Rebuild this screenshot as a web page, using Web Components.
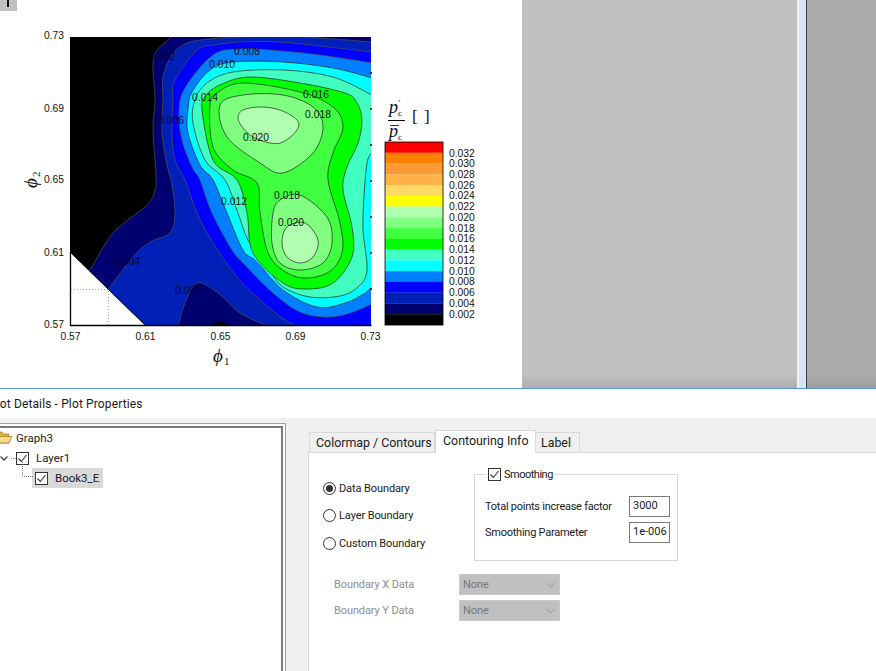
<!DOCTYPE html>
<html>
<head>
<meta charset="utf-8">
<title>Plot Details</title>
<style>
  html, body { margin: 0; padding: 0; height: 100%; overflow: hidden; background: #f0f0f0; }
  body { display: flex; flex-direction: column; width: 876px; height: 671px; font-family: Roboto, "Noto Sans", sans-serif; }
</style>
</head>
<body>
<work-area>
  <contour-plot></contour-plot>
</work-area>
<plot-dialog heading="Plot Details - Plot Properties">
  <tree-view slot="tree">
    <tree-row level="0" kind="folder">Graph3</tree-row>
    <tree-row level="1" kind="check" expander>Layer1</tree-row>
    <tree-row level="2" kind="check" selected>Book3_E</tree-row>
  </tree-view>
  <tab-panel slot="panel">
    <contour-form></contour-form>
  </tab-panel>
</plot-dialog>

<script>
class Component extends HTMLElement {
  constructor(template) {
    super()
    const _template = document.createElement('template')
    _template.innerHTML = template
    this.attachShadow({ mode: 'open' })
    this.shadowRoot.appendChild(_template.content.cloneNode(true))
  }
}

class WorkArea extends Component {
  constructor() {
    super(`
      <style>
      :host { display: flex; height: 388px; flex: none; }
      .sheet { width: 522px; background: #fff; position: relative; overflow: hidden; }
      .gap { width: 275px; background: linear-gradient(#c0c0c0 0, #c0c0c0 375px, #adadad 388px); }
      .edge { width: 9px; background: linear-gradient(90deg, #eef3fa 0 2px, #d6e3f3 2px); }
      .line { width: 1px; background: #3c3c3c; }
      .rest { flex: 1; background: linear-gradient(#ababab 0, #ababab 375px, #9c9c9c 388px); }
      .mark { position: absolute; left: 0; top: 0; width: 17px; height: 11px; background: #c0c0c0; }
      .mark i { position: absolute; left: 7px; top: 0; width: 2px; height: 7px; background: #111; }
      </style>
      <div class="sheet"><slot></slot><div class="mark"><i></i></div></div>
      <div class="gap"></div><div class="edge"></div><div class="line"></div><div class="rest"></div>
    `)
  }
}

// catmull-rom through the traced points, returned as bezier segments
function smooth(pts) {
  let d = `M${pts[0][0]} ${pts[0][1]}`
  for (let i = 0; i < pts.length - 1; i++) {
    const p0 = pts[i - 1] || pts[i], p1 = pts[i], p2 = pts[i + 1], p3 = pts[i + 2] || p2
    d += `C${(p1[0] + (p2[0] - p0[0]) / 6).toFixed(1)} ${(p1[1] + (p2[1] - p0[1]) / 6).toFixed(1)} `
      + `${(p2[0] - (p3[0] - p1[0]) / 6).toFixed(1)} ${(p2[1] - (p3[1] - p1[1]) / 6).toFixed(1)} ${p2[0]} ${p2[1]}`
  }
  return d
}
function closedLoop(pts) {
  const n = pts.length
  let d = `M${pts[0][0]} ${pts[0][1]}`
  for (let i = 0; i < n; i++) {
    const p0 = pts[(i - 1 + n) % n], p1 = pts[i], p2 = pts[(i + 1) % n], p3 = pts[(i + 2) % n]
    d += `C${(p1[0] + (p2[0] - p0[0]) / 6).toFixed(1)} ${(p1[1] + (p2[1] - p0[1]) / 6).toFixed(1)} `
      + `${(p2[0] - (p3[0] - p1[0]) / 6).toFixed(1)} ${(p2[1] - (p3[1] - p1[1]) / 6).toFixed(1)} ${p2[0]} ${p2[1]}`
  }
  return d + 'Z'
}

const BANDS = [
  ['#000070', '#555', [[180, 30], [170, 38], [156, 52], [153, 67], [155, 100], [153, 130], [156, 175], [155, 190], [147, 205], [113, 233], [90, 270], [70, 296]], [[60, 340], [385, 340], [385, 30]]],
  ['#0020b8', '#555', [[372, 42], [320, 38], [280, 36], [240, 37], [210, 39], [187, 43], [172, 55], [163, 77], [163, 100], [162, 133], [167, 165], [172, 185], [175, 213], [170, 233], [150, 242], [133, 257], [109, 288], [75, 330]], [[385, 340], [385, 42]]],
  ['#000070', '#555', [[177, 330], [185, 303], [197, 283], [217, 292], [240, 313], [268, 326], [275, 330]], []],
  ['#0000ff', '#555', [[372, 52], [320, 46], [280, 42], [240, 42], [215, 45], [197, 50], [175, 80], [173, 100], [172, 133], [175, 160], [185, 180], [197, 213], [213, 243], [237, 277], [257, 297], [285, 320], [310, 332]], [[385, 340], [385, 52]]],
  ['#0080ff', '#555', [[372, 63], [320, 55], [270, 50], [240, 49], [213, 55], [185, 88], [179, 113], [182, 140], [192, 167], [200, 180], [212, 213], [232, 250], [243, 263], [273, 293], [300, 312], [327, 317], [350, 313], [372, 304]], [[385, 304], [385, 63]]],
  ['#00ffff', '#222', [[372, 78], [333, 68], [283, 62], [233, 62], [210, 70], [192, 92], [188, 110], [188, 133], [200, 165], [213, 180], [227, 213], [243, 250], [257, 262], [283, 290], [317, 307], [345, 303], [365, 293], [375, 283]], [[385, 283], [385, 78]]],
  ['#40ffc0', '#222', [[372, 95], [333, 77], [283, 70], [233, 72], [207, 83], [195, 100], [193, 123], [205, 160], [225, 180], [238, 213], [248, 240], [267, 267], [283, 287], [310, 297], [340, 296], [358, 287], [367, 270], [363, 230], [364, 197], [367, 163], [372, 152]], [[385, 152], [385, 95]]],
]
const CORES = [
  ['#00ff00', [[202, 110], [206, 95], [222, 84], [250, 77], [300, 83], [345, 93], [357, 103], [362, 120], [358, 143], [347, 167], [343, 190], [352, 227], [352, 257], [333, 283], [307, 289], [283, 283], [253, 253], [247, 213], [237, 180], [213, 160]]],
  ['#40ff40', [[210, 105], [217, 93], [243, 83], [300, 92], [333, 107], [343, 127], [333, 153], [328, 180], [340, 223], [342, 253], [327, 273], [297, 277], [270, 257], [260, 213], [257, 183], [233, 170], [213, 147]]],
  ['#80ff80', [[220, 105], [243, 95], [283, 95], [313, 107], [323, 127], [313, 153], [283, 173], [260, 163], [227, 137]]],
  ['#80ff80', [[300, 195], [327, 217], [332, 243], [323, 263], [300, 270], [280, 263], [272, 243], [273, 213], [280, 200]]],
  ['#b0ffb0', [[238, 118], [243, 110], [260, 107], [280, 110], [297, 120], [297, 130], [283, 142], [270, 143], [253, 137], [243, 128]]],
  ['#b0ffb0', [[305, 223], [318, 240], [313, 257], [300, 263], [287, 257], [282, 243], [287, 227]]],
]
const LABELS = [
  ['0.002', 162, 60, '#000030'], ['0.008', 247, 55], ['0.010', 222, 68], ['0.014', 205, 101], ['0.006', 171, 124, '#000030'],
  ['0.016', 316, 98], ['0.018', 318, 118], ['0.020', 256, 141], ['0.018', 287, 199], ['0.020', 291, 226],
  ['0.012', 234, 205], ['0.004', 127, 265, '#000030'], ['0.006', 188, 294, '#000030'],
]
const SCALE = ['#ff0000', '#ff8000', '#ff9933', '#ffb347', '#ffd966', '#ffff00', '#b0ffb0', '#80ff80', '#40ff40', '#00ff00', '#40ffc0', '#00ffff', '#0080ff', '#0000ff', '#0020b8', '#000070', '#000000']

class ContourPlot extends Component {
  constructor() {
    const bands = BANDS.map(([fill, line, curve, tail]) => {
      const d = smooth(curve) + tail.map(p => `L${p[0]} ${p[1]}`).join('') + 'Z'
      return `<path d="${d}" fill="${fill}" stroke="${line}" stroke-width=".7"/>`
    }).join('')
    const cores = CORES.map(([fill, pts]) =>
      `<path d="${closedLoop(pts)}" fill="${fill}" stroke="#222" stroke-width=".7"/>`).join('')
    const labels = LABELS.map(([t, x, y, c]) => `<text x="${x}" y="${y}" text-anchor="middle" style="fill:${c || '#111'}">${t}</text>`).join('')
    const scale = SCALE.map((c, i) => `<rect x="385" y="${(142 + i * 10.76).toFixed(2)}" width="58" height="10.9" fill="${c}"/>`).join('')
    const scaleText = SCALE.slice(0, 16).map((c, i) =>
      `<text x="449" y="${(156.5 + i * 10.73).toFixed(1)}">${(0.032 - i * 0.002).toFixed(3)}</text>`).join('')
    let ticks = ''
    for (let y = 73; y <= 289; y += 36) ticks += `M370 ${y}h2`
    const ax = v => v.map(([t, x]) => `<text x="${x}" y="340" text-anchor="middle">${t}</text>`).join('')
    const ay = v => v.map(([t, y]) => `<text x="64" y="${y}" text-anchor="end">${t}</text>`).join('')
    super(`
      <style>
      :host { display: block; width: 522px; height: 388px; }
      svg { display: block; }
      text { font-family: "Liberation Sans", Arial, sans-serif; font-size: 10.3px; fill: #111; }
      .math, .math text { font-family: "Liberation Serif", "DejaVu Serif", serif; }
      .math text { font-size: 19px; font-style: italic; }
      .math .sub { font-size: 11px; font-style: normal; }
      </style>
      <svg width="522" height="388" viewBox="0 0 522 388">
        <defs><clipPath id="frame"><path d="M70 37H371V325H145L70 252Z"/></clipPath></defs>
        <g clip-path="url(#frame)">
          <rect x="70" y="37" width="301" height="288" fill="#000"/>
          ${bands}
          <ellipse cx="220" cy="326" rx="8" ry="4" fill="#000"/>
          ${cores}
        </g>
        <g>${labels}</g>
        <path d="M70.5 252.500L145 325" stroke="#000" stroke-width=".8"/>
        <path d="M71 289.500H108.500V325" fill="none" stroke="#888" stroke-width=".8" stroke-dasharray="1 2"/>
        <path d="M70.500 252V325.500H371.500${ticks}" fill="none" stroke="#000" stroke-width="1.300"/>
        ${ax([['0.57', 70.5], ['0.61', 145.5], ['0.65', 220.5], ['0.69', 295.5], ['0.73', 370.5]])}
        ${ay([['0.73', 39], ['0.69', 112], ['0.65', 183], ['0.61', 256], ['0.57', 328]])}
        <g class="math">
          <text x="213" y="362">&#981;</text><text class="sub" x="224" y="365">1</text>
          <g transform="translate(37 188) rotate(-90)"><text x="0" y="0">&#981;</text><text class="sub" x="11" y="3">2</text></g>
          <text x="389" y="113" style="font-size:18px">p</text><text x="398" y="106" style="font-size:9px">&#8242;</text><text class="sub" x="398" y="116" style="font-size:9px">c</text>
          <path d="M388 120.500H405" stroke="#000" stroke-width="1"/>
          <path d="M390 125.500H399" stroke="#000" stroke-width=".8"/>
          <text x="389" y="137" style="font-size:18px">p</text><text class="sub" x="398" y="140" style="font-size:9px">c</text>
          <text class="sub" x="412" y="122" style="font-size:17px">[</text><text class="sub" x="424" y="122" style="font-size:17px">]</text>
        </g>
        ${scale}
        <rect x="385" y="142" width="58" height="183" fill="none" stroke="#000" stroke-width=".8"/>
        ${scaleText}
      </svg>
    `)
  }
}

class PlotDialog extends Component {
  constructor() {
    super(`
      <style>
      :host { display: flex; flex-direction: column; flex: 1; min-height: 0; background: #f0f0f0; color: #1a1a1a; }
      .title { height: 29px; flex: none; background: #fff; border-top: 1px solid #5b9bd5; overflow: hidden; font-size: 12px; line-height: 31px; white-space: nowrap; }
      .title span { display: block; margin-left: -11px; letter-spacing: .13px; }
      .body { flex: 1; display: flex; min-height: 0; padding-top: 5px; gap: 22px; }
      ::slotted([slot=tree]) { width: 286px; flex: none; }
      ::slotted([slot=panel]) { flex: 1; margin-top: 7px; }
      </style>
      <div class="title"><span id="t"></span></div>
      <div class="body"><slot name="tree"></slot><slot name="panel"></slot></div>
    `)
  }
  connectedCallback() {
    this.shadowRoot.querySelector('#t').textContent = this.getAttribute('heading')
  }
}

class TreeView extends Component {
  constructor() {
    super(`
      <style>
      :host { display: flex; box-sizing: border-box; background: #fff; border: solid #a0a0a0; border-width: 1px 1px 0 0; padding: 2px 2px 0 0; font-size: 11.500px; overflow: hidden; }
      .inner { flex: 1; border: solid #7a7a7a; border-width: 2px 2px 0 0; }
      </style>
      <div class="inner"><slot></slot></div>
    `)
  }
}

const CHECK = `<svg width="13" height="13" viewBox="0 0 13 13"><rect x=".5" y=".5" width="12" height="12" fill="#fff" stroke="#333"/><path d="M2.500 6.500L5.300 9.500L10.500 3" fill="none" stroke="#333" stroke-width="1.100"/></svg>`

class TreeRow extends Component {
  constructor() {
    super(`
      <style>
      :host { display: flex; align-items: center; height: 20px; position: relative; }
      .ico { display: flex; align-items: center; flex: none; height: 20px; }
      .sel { display: flex; align-items: center; height: 20px; gap: 7px; padding: 0 3px; }
      :host([selected]) .sel { background: #d9d9d9; width: 65px; }
      .folder { margin-left: -8px; margin-right: -4px; }
      .chev { position: absolute; left: 0; top: 6px; }
      svg { display: block; }
      </style>
      <div class="sel" id="cell"></div>
    `)
  }
  connectedCallback() {
    const level = +this.getAttribute('level')
    const cell = this.shadowRoot.querySelector('#cell')
    this.style.paddingLeft = [0, 13, 32][level] + 'px'
    if (this.getAttribute('kind') === 'folder') {
      cell.innerHTML = `<svg class="folder" width="18" height="14" viewBox="0 0 18 14"><path d="M1 3L2 1H7L8.500 3H14V12H2Z" fill="#e0b040" stroke="#a07820" stroke-width=".7"/><path d="M2 12L5 5.500H17L14 12Z" fill="#f7dc8c" stroke="#a07820" stroke-width=".7"/></svg><slot></slot>`
    } else {
      cell.innerHTML = `<span class="ico">${CHECK}</span><slot></slot>`
    }
    if (this.hasAttribute('expander')) {
      const mark = document.createElement('span')
      mark.className = 'chev'
      mark.innerHTML = `<svg width="17" height="9" viewBox="0 0 17 9"><path d="M.5 2.500L4 6L7.500 2.500" fill="none" stroke="#444" stroke-width="1.300"/><path d="M11 4.500H16" stroke="#888" stroke-dasharray="1 1"/></svg>`
      this.shadowRoot.appendChild(mark)
    }
    if (level === 2) {
      const link = document.createElement('span')
      link.innerHTML = `<svg style="position:absolute;left:22px;top:-6px" width="11" height="17" viewBox="0 0 11 17"><path d="M.5 0V14.500H11" fill="none" stroke="#777" stroke-dasharray="1 1"/></svg>`
      this.shadowRoot.appendChild(link)
    }
  }
}

class TabPanel extends Component {
  constructor() {
    super(`
      <style>
      :host { display: flex; flex-direction: column; font-size: 12.400px; min-width: 0; }
      .tabs { display: flex; align-items: flex-end; height: 22px; flex: none; padding-left: 1px; position: relative; z-index: 1; }
      .tab { height: 20px; line-height: 20px; background: #f0f0f0; border: 1px solid #d9d9d9; border-bottom: 0; box-sizing: border-box; white-space: nowrap; }
      .a { width: 126px; padding-left: 6px; }
      .b { width: 101px; height: 23px; line-height: 20px; background: #fff; padding-left: 7px; margin-bottom: -1px; border-bottom: 0; }
      .c { width: 44px; padding-left: 5px; border-left: 0; }
      .page { flex: 1; background: #fff; border: solid #d9d9d9; border-width: 1px 0 0 1px; }
      </style>
      <div class="tabs">
        <div class="tab a">Colormap / Contours</div>
        <div class="tab b">Contouring Info</div>
        <div class="tab c">Label</div>
      </div>
      <div class="page"><slot></slot></div>
    `)
  }
}

class ContourForm extends Component {
  constructor() {
    super(`
      <style>
      :host { display: block; padding: 21px 0 0 14px; font-size: 11px; }
      .top { display: flex; }
      .radios { width: 151px; flex: none; display: flex; flex-direction: column; gap: 7.500px; padding-top: 4px; letter-spacing: -.1px; }
      .group { width: 204px; height: 87px; box-sizing: border-box; border: 1px solid #d9d9d9; position: relative; padding: 21px 7px 0 10px; display: flex; flex-direction: column; gap: 5px; letter-spacing: -.25px; }
      .legend { position: absolute; left: 11px; top: -8px; background: #fff; padding: 0 1px 0 2px; display: flex; align-items: center; gap: 3px; height: 15px; letter-spacing: -.5px; }
      .legend svg { display: block; }
      .rows { margin: 13px 0 0 11px; display: flex; flex-direction: column; gap: 5px; letter-spacing: -.1px; }
      </style>
      <div class="top">
        <div class="radios">
          <radio-option checked>Data Boundary</radio-option>
          <radio-option>Layer Boundary</radio-option>
          <radio-option>Custom Boundary</radio-option>
        </div>
        <div class="group">
          <div class="legend">${CHECK}<span>Smoothing</span></div>
          <value-field value="3000">Total points increase factor</value-field>
          <value-field value="1e-006">Smoothing Parameter</value-field>
        </div>
      </div>
      <div class="rows">
        <combo-field>Boundary X Data</combo-field>
        <combo-field>Boundary Y Data</combo-field>
      </div>
    `)
  }
}

class RadioOption extends Component {
  constructor() {
    super(`
      <style>
      :host { display: flex; align-items: center; gap: 3px; height: 20px; }
      .dot { width: 11px; height: 11px; border: 1px solid #333; border-radius: 50%; display: flex; align-items: center; justify-content: center; flex: none; }
      :host([checked]) .dot::after { content: ''; width: 7px; height: 7px; border-radius: 50%; background: #333; }
      </style>
      <span class="dot"></span><slot></slot>
    `)
  }
}

class ValueField extends Component {
  constructor() {
    super(`
      <style>
      :host { display: flex; align-items: center; justify-content: space-between; height: 21px; }
      .box { width: 41px; height: 21px; box-sizing: border-box; border: 1px solid #7a7a7a; background: #fff; line-height: 17px; padding-left: 3px; white-space: nowrap; letter-spacing: 0; }
      </style>
      <span><slot></slot></span><span class="box" id="v"></span>
    `)
  }
  connectedCallback() {
    this.shadowRoot.querySelector('#v').textContent = this.getAttribute('value')
  }
}

class ComboField extends Component {
  constructor() {
    super(`
      <style>
      :host { display: flex; align-items: center; height: 21px; color: #8e8e8e; }
      .label { width: 125px; flex: none; }
      .combo { width: 101px; height: 21px; box-sizing: border-box; background: #c0c0c0; border: 1px solid #c8c8c8; display: flex; align-items: center; justify-content: space-between; padding: 0 4px 0 3px; color: #777; }
      svg { display: block; }
      </style>
      <span class="label"><slot></slot></span>
      <div class="combo"><span>None</span><svg width="9" height="6" viewBox="0 0 9 6"><path d="M.5 1L4.500 5L8.500 1" fill="none" stroke="#a8a8a8" stroke-width="1.200"/></svg></div>
    `)
  }
}

window.customElements.define('work-area', WorkArea)
window.customElements.define('contour-plot', ContourPlot)
window.customElements.define('plot-dialog', PlotDialog)
window.customElements.define('tree-view', TreeView)
window.customElements.define('tree-row', TreeRow)
window.customElements.define('tab-panel', TabPanel)
window.customElements.define('contour-form', ContourForm)
window.customElements.define('radio-option', RadioOption)
window.customElements.define('value-field', ValueField)
window.customElements.define('combo-field', ComboField)
</script>
</body>
</html>
